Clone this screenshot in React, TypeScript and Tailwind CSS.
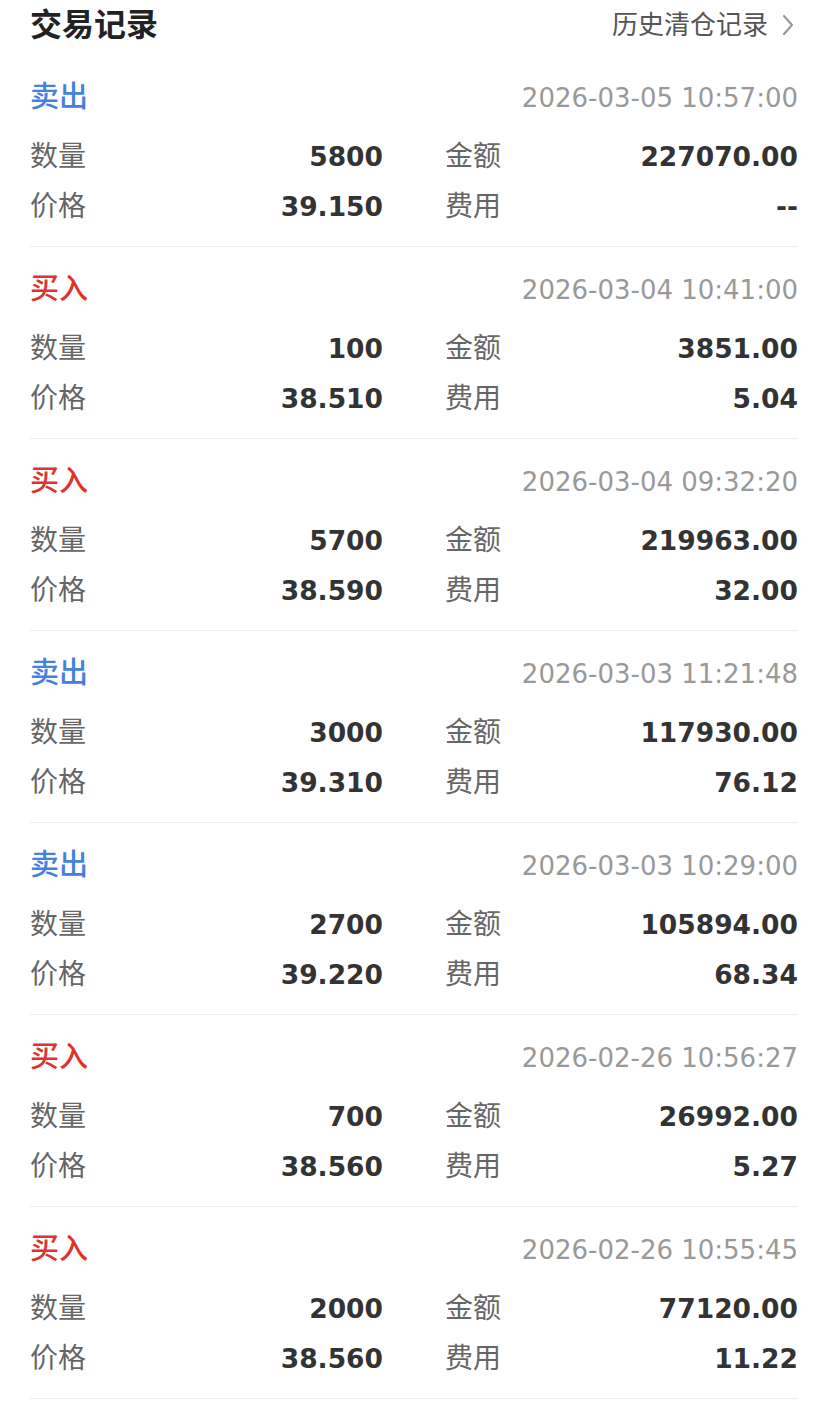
import React from "react";

type Trade = {
  side: "buy" | "sell";
  time: string;
  qty: string;
  amount: string;
  price: string;
  fee: string;
};

const trades: Trade[] = [
  { side: "sell", time: "2026-03-05 10:57:00", qty: "5800", amount: "227070.00", price: "39.150", fee: "--" },
  { side: "buy", time: "2026-03-04 10:41:00", qty: "100", amount: "3851.00", price: "38.510", fee: "5.04" },
  { side: "buy", time: "2026-03-04 09:32:20", qty: "5700", amount: "219963.00", price: "38.590", fee: "32.00" },
  { side: "sell", time: "2026-03-03 11:21:48", qty: "3000", amount: "117930.00", price: "39.310", fee: "76.12" },
  { side: "sell", time: "2026-03-03 10:29:00", qty: "2700", amount: "105894.00", price: "39.220", fee: "68.34" },
  { side: "buy", time: "2026-02-26 10:56:27", qty: "700", amount: "26992.00", price: "38.560", fee: "5.27" },
  { side: "buy", time: "2026-02-26 10:55:45", qty: "2000", amount: "77120.00", price: "38.560", fee: "11.22" },
];

const Cell = ({ label, value }: { label: string; value: string }) => (
  <div className="flex items-center justify-between h-[50px]">
    <span className="text-[28px] text-[#666]">{label}</span>
    <span className="font-['DejaVu_Sans'] text-[26.5px] font-bold text-[#333]">{value}</span>
  </div>
);

const TradeItem = ({ t }: { t: Trade }) => (
  <div className="pt-[23px] pb-[14px] border-b border-[#ececec]">
    <div className="flex items-center justify-between h-[40px]">
      <span
        className={
          t.side === "sell"
            ? "text-[29px] font-medium text-[#4380e0]"
            : "text-[29px] font-medium text-[#e0322b]"
        }
      >
        {t.side === "sell" ? "卖出" : "买入"}
      </span>
      <span className="font-['DejaVu_Sans'] text-[26px] text-[#999]">{t.time}</span>
    </div>
    <div className="grid grid-cols-2 gap-x-[62px] mt-[14px]">
      <Cell label="数量" value={t.qty} />
      <Cell label="金额" value={t.amount} />
      <Cell label="价格" value={t.price} />
      <Cell label="费用" value={t.fee} />
    </div>
  </div>
);

export default function App() {
  return (
    <div
      className="bg-white min-h-screen px-[30px]"
      style={{ fontFamily: '"Liberation Sans", "Noto Sans CJK SC", sans-serif' }}
    >
      <div className="flex items-center justify-between h-[50px] mb-[5px]">
        <h1 className="text-[32px] font-bold text-[#222]">交易记录</h1>
        <div className="flex items-center gap-[14px] text-[26px] text-[#555]">
          <span>历史清仓记录</span>
          <svg width="12" height="22" viewBox="0 0 12 22" fill="none" className="mr-[4px]">
            <path d="M2 2l8 9-8 9" stroke="#999" strokeWidth="2.2" strokeLinecap="round" strokeLinejoin="round" />
          </svg>
        </div>
      </div>
      {trades.map((t, i) => (
        <TradeItem key={i} t={t} />
      ))}
    </div>
  );
}
